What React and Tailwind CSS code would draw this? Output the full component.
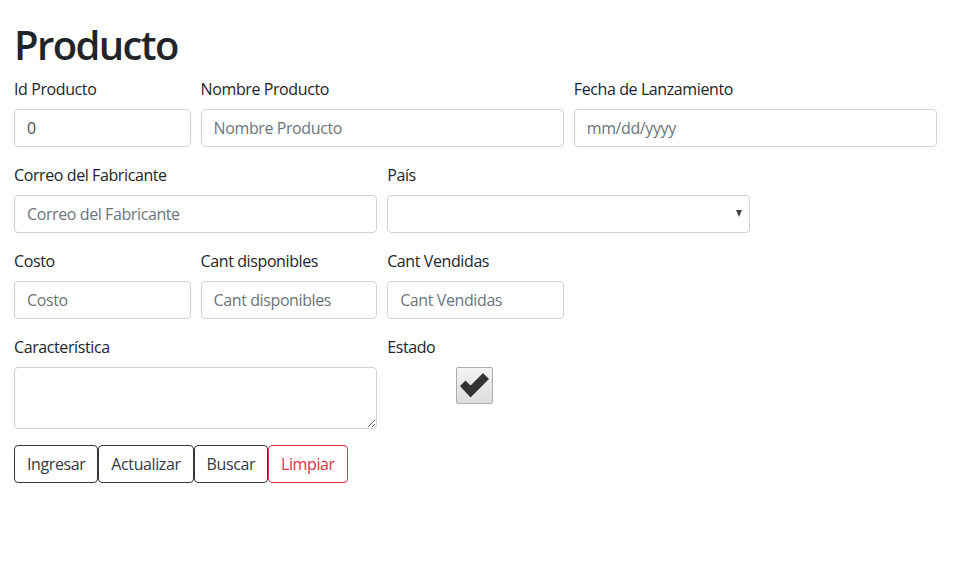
import { useState } from 'react';

const inputCls =
  'block w-full h-[38px] px-3 py-1.5 text-base tracking-[-0.4px] text-[#495057] bg-white border border-[#ced4da] rounded-[4px] placeholder:text-[#6c757d] outline-none';

const Field = ({ label, span = 'col-span-1', children }) => (
  <div className={`${span} mb-4`}>
    <label className="block mb-2 leading-6 text-[#212529]">{label}</label>
    {children}
  </div>
);

const App = () => {
  const [estado, setEstado] = useState(true);

  const buttons = [
    { label: 'Ingresar', cls: 'border-[#343a40] text-[#343a40]' },
    { label: 'Actualizar', cls: 'border-[#343a40] text-[#343a40]' },
    { label: 'Buscar', cls: 'border-[#343a40] text-[#343a40]' },
    { label: 'Limpiar', cls: 'border-[#dc3545] text-[#dc3545]' },
  ];

  return (
    <div className="min-h-[564px] bg-white pt-[21px] pl-[14px] font-['Open_Sans','Noto_Sans',sans-serif] text-base tracking-[-0.4px] text-[#212529]">
      <h1 className="text-[40px] leading-[48px] font-semibold tracking-[-1.6px] mb-2">Producto</h1>

      <form className="w-[923px] grid grid-cols-5 gap-x-[10px]" onSubmit={(e) => e.preventDefault()}>
        {/* fila 1 */}
        <Field label="Id Producto">
          <input className={inputCls} defaultValue="0" />
        </Field>
        <Field label="Nombre Producto" span="col-span-2">
          <input className={inputCls} placeholder="Nombre Producto" />
        </Field>
        <Field label="Fecha de Lanzamiento" span="col-span-2">
          <input className={inputCls} placeholder="mm/dd/yyyy" />
        </Field>

        {/* fila 2 */}
        <Field label="Correo del Fabricante" span="col-span-2">
          <input className={inputCls} placeholder="Correo del Fabricante" />
        </Field>
        <Field label="País" span="col-span-2">
          <div className="relative">
            <select className={`${inputCls} appearance-none`} defaultValue="">
              <option value=""></option>
            </select>
            <span className="absolute right-[8px] top-[15px] w-0 h-0 border-l-[3.5px] border-r-[3.5px] border-t-[7px] border-l-transparent border-r-transparent border-t-[#444]" />
          </div>
        </Field>
        <div className="col-span-1" />

        {/* fila 3 */}
        <Field label="Costo">
          <input className={inputCls} placeholder="Costo" />
        </Field>
        <Field label="Cant disponibles">
          <input className={inputCls} placeholder="Cant disponibles" />
        </Field>
        <Field label="Cant Vendidas">
          <input className={inputCls} placeholder="Cant Vendidas" />
        </Field>
        <div className="col-span-2" />

        {/* fila 4 */}
        <Field label="Característica" span="col-span-2">
          <textarea rows={2} className={`${inputCls} h-[62px] resize-y leading-6`} />
        </Field>
        <Field label="Estado">
          <div className="flex justify-center pr-[2px]">
            <button
              type="button"
              onClick={() => setEstado(!estado)}
              className="w-[37px] h-[37px] flex items-center justify-center rounded-[2px] border border-[#adadad] bg-gradient-to-b from-[#f4f4f4] to-[#dcdcdc]"
            >
              {estado && (
                <svg width="31" height="27" viewBox="0 0 31 27">
                  <path d="M1 14 L6.5 8.5 L11.5 13.5 L24 1 L30 7 L11.5 25.5 Z" fill="#333" />
                </svg>
              )}
            </button>
          </div>
        </Field>
      </form>

      <div className="flex">
        {buttons.map((b) => (
          <button
            key={b.label}
            type="button"
            className={`h-[38px] px-3 border rounded-[4px] bg-white text-base leading-6 ${b.cls}`}
          >
            {b.label}
          </button>
        ))}
      </div>
    </div>
  );
};

export default App;
